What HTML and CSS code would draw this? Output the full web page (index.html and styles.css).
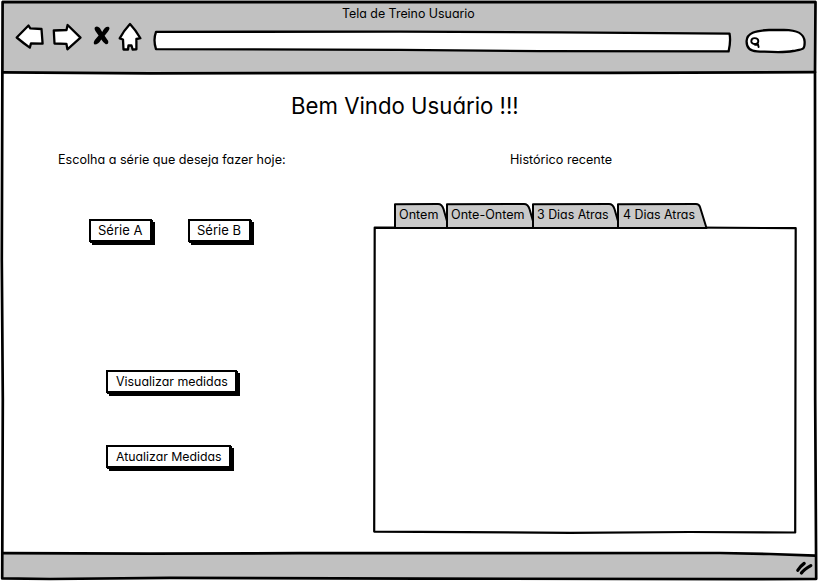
FILE: index.html
```html
<!DOCTYPE html>
<html lang="pt">
<head>
<meta charset="utf-8">
<title>Tela de Treino Usuario</title>
<link rel="stylesheet" href="styles.css">
</head>
<body>
<div class="window">
  <header class="chrome">
    <div class="window-title">Tela de Treino Usuario</div>
    <div class="toolbar">
      <svg class="nav-icons" width="130" height="32" viewBox="14 21 130 32">
        <g fill="#fff" stroke="#000" stroke-width="2.3" stroke-linejoin="round">
          <path d="M16.7 37.5 28.5 25.5 30.3 28.4 41.5 29 42.6 43.6 31 43.4 29.8 47.6Q23 42.8 16.7 37.5Z"/>
          <path d="M53.8 30.5 66.5 30 67.6 25 80.5 37.6 67.4 49.3 66.4 43.8 54.5 43.5Z"/>
          <path d="M130 24Q136 30.5 140.4 38.2L136.4 39 136.4 49.3 132.6 49.5 131.5 45.5 128.5 45.5 128 49.5 123.5 49.5 123 39.5 119.7 38.4Q123.5 31 130 24Z"/>
        </g>
        <path d="M94.8 27.6Q97 25 99.8 28L102.2 32Q105 26.2 108.4 26.8Q110.8 28 108 31.5L104.6 35.7L108.2 41Q108.8 44.5 105.8 44.2Q103 42.5 101.3 39.6Q98.5 44.5 94.6 44.6Q92.8 43 94.8 40L98.6 35.5L95.4 31Q94 29 94.8 27.6Z"/>
      </svg>
      <svg class="address" width="580" height="26" viewBox="152 28 580 26">
        <path d="M156 31.8 400 31.7 560 32.3 729.5 33.6Q731 41 728.6 51.4L540 51.2 400 49.8 156 49.2Q153 40 156 31.8Z" fill="#fff" stroke="#000" stroke-width="2.3" stroke-linejoin="round"/>
      </svg>
      <svg class="search" width="64" height="30" viewBox="744 26 64 30">
        <path d="M746.6 41C747 33 755 30.5 769 30L784 29.8C797 30 804 33 804.6 41.5C805 50 803 49 793 51C783 53 773 52 757 51.3C750 51 746.4 48 746.6 41Z" fill="#fff" stroke="#000" stroke-width="2.3"/>
        <path d="M751.3 41.2C751.3 37.2 758 37.2 758.3 41C758.5 45 751.3 45 751.3 41.2ZM755 44.7 758 44.5 758.6 47" fill="none" stroke="#000" stroke-width="1.9" stroke-linecap="round"/>
      </svg>
    </div>
  </header>
  <main class="page">
    <h1>Bem Vindo Usuário !!!</h1>
    <div class="columns">
      <section class="choices">
        <p class="prompt">Escolha a série que deseja fazer hoje:</p>
        <div class="series">
          <button class="btn btn-series">Série A</button>
          <button class="btn btn-series">Série B</button>
        </div>
        <div class="measures">
          <button class="btn btn-view">Visualizar medidas</button>
          <button class="btn btn-update">Atualizar Medidas</button>
        </div>
      </section>
      <section class="history">
        <p class="history-label">Histórico recente</p>
        <nav class="tabs">
          <svg class="tab-shapes" width="318" height="28" viewBox="392 201 318 28" fill="#c9c9c9" stroke="#000" stroke-width="2" stroke-linejoin="round">
            <path d="M395 228V204.3L438 204Q442 204 443.5 209L449 228Z"/>
            <path d="M447 228V204.3L524 204Q528 204 529.5 209L535 228Z"/>
            <path d="M533 228V204.3L609 204Q613 204 614.5 209L620 228Z"/>
            <path d="M618 228V204.3L696 204Q699 204 700 207L706.5 228Z"/>
          </svg>
          <a class="tab tab-short">Ontem</a>
          <a class="tab">Onte-Ontem</a>
          <a class="tab tab-days">3 Dias Atras</a>
          <a class="tab tab-days">4 Dias Atras</a>
        </nav>
        <div class="panel">
          <svg width="424" height="308" viewBox="373 226 424 308">
            <path d="M374.7 227.6 520 228 630 227.2 795.7 228.2 795.2 532.5 690 532 570 532.8 374.2 531.6Z" fill="#fff" stroke="#000" stroke-width="2.2" stroke-linejoin="round"/>
          </svg>
        </div>
      </section>
    </div>
  </main>
  <svg class="frame" width="818" height="581" viewBox="0 0 818 581" fill="none" stroke="#000" stroke-width="2.7" stroke-linecap="round" stroke-linejoin="round">
    <path class="footer-fill" stroke="none" d="M3 553.5 150 553.8 310 553 730 553 815.5 555.7V578.5H3Z"/>
    <path d="M2.6 2 815.5 2.1 815 73 815.2 400 816.2 578.8 740 579.2 420 578.6 170 577.8 50 579 2.2 578.4 2.8 400 1.8 260 2.6 2Z"/>
    <path d="M3 72.4 150 73.3 420 72.8 610 72.9 815 72.2"/>
    <path d="M3 553.2 150 553.7 300 553.2 720 553 770 554 815.5 555.6"/>
    <path d="M797.8 570.3Q800 566.5 804.2 563.4M801.4 573Q804 569.3 810.8 565.6" stroke-width="3.2"/>
  </svg>
</div>
</body>
</html>
```
FILE: styles.css
```css
* {
  box-sizing: border-box;
}

body {
  margin: 0;
  background: #fff;
  color: #000;
  font: 12.6px/16px Inter, "Open Sans", sans-serif;
  font-feature-settings: "cv11";
  white-space: nowrap;
}

h1,
p {
  margin: 0;
  font-weight: 400;
}

svg {
  display: block;
}

.window {
  position: relative;
  width: 818px;
  height: 581px;
  overflow: hidden;
}

.chrome {
  height: 73px;
  margin: 0 2px;
  padding-top: 6px;
  background: #c1c1c1;
}

.window-title {
  padding-left: 340px;
  font-size: 12.4px;
}

.toolbar {
  display: flex;
  margin-top: -1px;
  padding-left: 12px;
}

.address {
  margin: 7px 12px 0 8px;
}

.search {
  margin-top: 5px;
}

h1 {
  padding: 18px 0 0 291px;
  font-size: 22.2px;
  line-height: 30px;
}

.columns {
  display: grid;
  grid-template-columns: 373px 424px;
  padding-top: 31px;
}

.prompt {
  padding-left: 58px;
}

.series {
  display: flex;
  gap: 36px;
  padding: 51px 0 0 89px;
}

.measures {
  display: flex;
  flex-direction: column;
  align-items: flex-start;
  gap: 52px;
  padding: 128px 0 0 106px;
}

.btn {
  height: 23px;
  padding: 1px 0 0 8px;
  border: 2px solid #000;
  background: #fff;
  box-shadow: 1px 1px 0 #000, 3px 3px 0 #000;
  color: inherit;
  font: inherit;
  font-size: 12.4px;
  font-feature-settings: inherit;
  text-align: left;
}

.btn-series {
  width: 63px;
  padding: 0 0 1px 7px;
  font-size: 13px;
}

.btn-view {
  width: 131px;
}

.btn-update {
  width: 125px;
  font-size: 12.3px;
}

.history-label {
  padding-left: 137px;
}

.tabs {
  position: relative;
  display: flex;
  height: 25px;
  margin-top: 33px;
  padding-left: 21px;
}

.tab-shapes {
  position: absolute;
  left: 19px;
  top: 0;
}

.tab {
  position: relative;
  width: 86px;
  padding: 6px 0 0 5px;
}

.tab-short {
  width: 52px;
}

.tab-days {
  font-size: 12.4px;
}

.frame {
  position: absolute;
  inset: 0;
  pointer-events: none;
}

.footer-fill {
  fill: #c1c1c1;
}
```
